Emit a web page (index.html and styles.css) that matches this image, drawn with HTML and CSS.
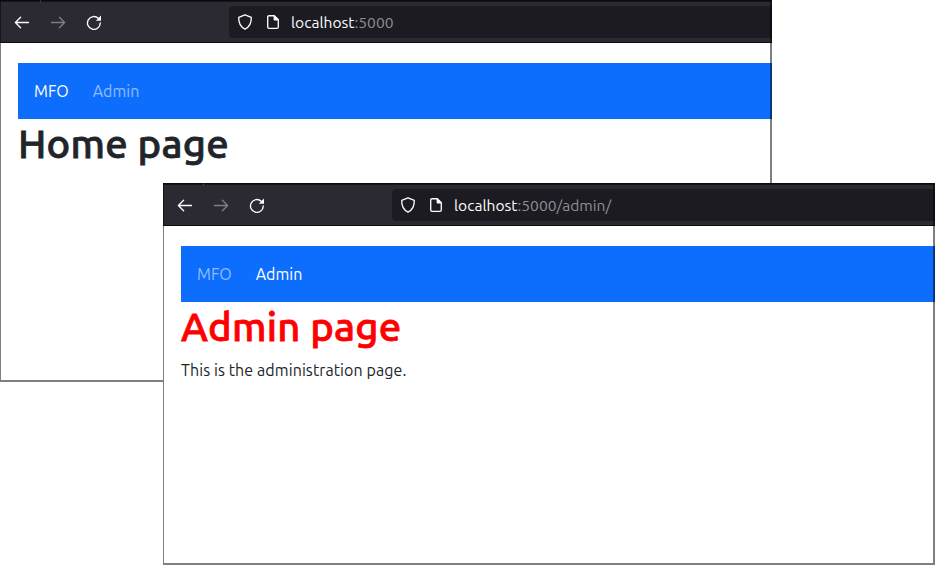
FILE: index.html
```
<!DOCTYPE html>
<html lang="en">
<head>
<meta charset="utf-8">
<title>MFO</title>
<link rel="stylesheet" href="styles.css">
</head>
<body>
<svg width="0" height="0" class="defs" aria-hidden="true">
  <symbol id="arrow" viewBox="0 0 16 16"><path d="M14.5 8.5H1.6M6.6 3.3 1.4 8.5l5.2 5.2"/></symbol>
  <symbol id="reload" viewBox="0 0 16 16"><path d="M14.3 9A6.4 6.4 0 1 1 12.3 4.3"/><path class="solid" d="M15 1.6v5.2H9.8z"/></symbol>
  <symbol id="shield" viewBox="0 0 16 16"><path d="M8 .8 14.3 3.3C14.5 8.5 12.4 13 8 15.2 3.6 13 1.5 8.5 1.7 3.3z"/></symbol>
  <symbol id="page" viewBox="0 0 16 16"><path d="M9.2 1.7H4A1.3 1.3 0 0 0 2.7 3v10A1.3 1.3 0 0 0 4 14.3h8a1.3 1.3 0 0 0 1.3-1.3V5.8z"/><path class="solid" d="M8.6 1.2h1L13.8 5.4v1H9.6a1 1 0 0 1-1-1z"/></symbol>
</svg>
<main class="desktop">
  <section class="window home">
    <header class="toolbar">
      <svg class="icon"><use href="#arrow"/></svg>
      <svg class="icon forward"><use href="#arrow"/></svg>
      <svg class="icon"><use href="#reload"/></svg>
      <div class="address">
        <svg class="icon"><use href="#shield"/></svg>
        <svg class="icon"><use href="#page"/></svg>
        <span class="url"><span class="host">localhost</span><span class="path">:5000</span></span>
      </div>
    </header>
    <div class="content">
      <nav class="navbar"><a class="brand active">MFO</a><a class="link">Admin</a></nav>
      <h1>Home page</h1>
    </div>
  </section>
  <section class="window admin">
    <header class="toolbar">
      <svg class="icon"><use href="#arrow"/></svg>
      <svg class="icon forward"><use href="#arrow"/></svg>
      <svg class="icon"><use href="#reload"/></svg>
      <div class="address">
        <svg class="icon"><use href="#shield"/></svg>
        <svg class="icon"><use href="#page"/></svg>
        <span class="url"><span class="host">localhost</span><span class="path">:5000/admin/</span></span>
      </div>
    </header>
    <div class="content">
      <nav class="navbar"><a class="brand">MFO</a><a class="link active">Admin</a></nav>
      <h1 class="red">Admin page</h1>
      <p>This is the administration page.</p>
    </div>
  </section>
</main>
</body>
</html>
```
FILE: styles.css
```
* { box-sizing: border-box; }
body { margin: 0; background: #fff; font: 16px/24px Ubuntu, "Noto Sans", sans-serif; color: #212529; }
.defs { position: absolute; }
.desktop { position: relative; width: 938px; height: 568px; overflow: hidden; }
.window { position: absolute; width: 772px; height: 382px; background: #fff; overflow: hidden; }
.home { left: 0; top: 0; }
.admin { left: 163px; top: 183px; }
.window::after { content: ""; position: absolute; inset: 0; border: solid rgba(0, 0, 0, .5); border-width: 1px 2px 2px 1px; }
.window::before { content: ""; position: absolute; left: 40px; top: 0; width: 1px; height: 2px; background: #55545c; }
.toolbar { display: flex; align-items: center; height: 43px; padding: 2px 0 2px 14px; gap: 20px; background: #2b2a33; border-top: 2px solid #15141a; border-bottom: 1px solid #0c0c0d; }
.icon { display: block; flex: none; width: 16px; height: 16px; fill: none; stroke: #fbfbfe; stroke-width: 1.35; stroke-linecap: round; stroke-linejoin: round; }
.solid { fill: #fbfbfe; stroke: none; }
.forward { transform: scaleX(-1); opacity: .4; }
.address { display: flex; align-items: center; flex: 1; height: 32px; margin-left: 107px; padding-left: 8px; gap: 12px; background: #1c1b22; border-radius: 4px 0 0 4px; }
.url { font-size: 15.6px; line-height: 20px; margin: 0 0 1px -2px; white-space: nowrap; }
.host { color: #fbfbfe; }
.path { color: #8f8f96; }
.content { padding: 20px 0 0 17px; margin-left: 1px; }
.navbar { display: flex; align-items: center; height: 56px; padding-left: 16px; gap: 24px; background: #0d6efd; color: rgba(255, 255, 255, .55); }
.active { color: #fff; }
h1 { margin: 0; padding-top: 1px; height: 56px; font-size: 40px; line-height: 48px; font-weight: 500; letter-spacing: .25px; -webkit-text-stroke: .8px currentColor; white-space: nowrap; }
.red { color: #f00; }
p { margin: 0; letter-spacing: .09px; }
```
